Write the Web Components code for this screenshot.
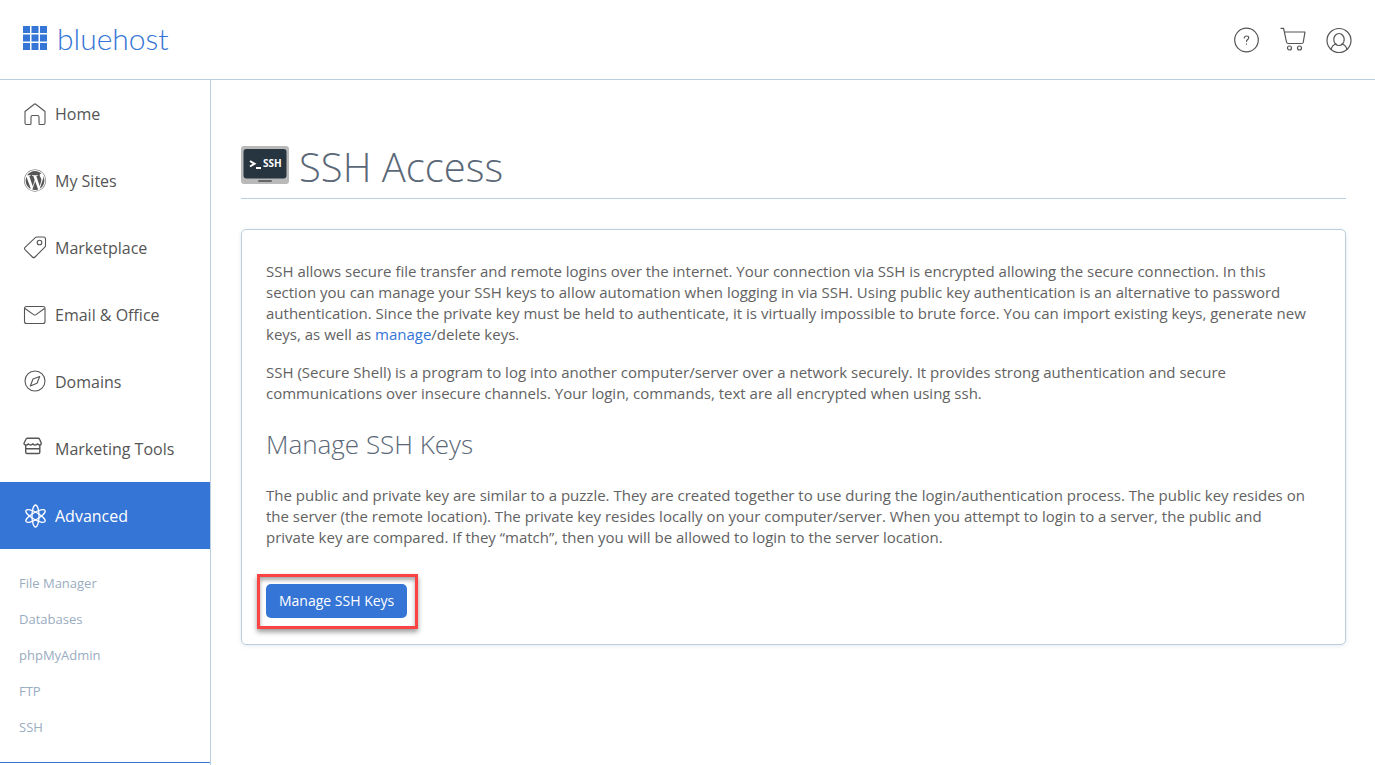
<!DOCTYPE html>
<html lang="en">
<head>
<meta charset="utf-8">
<meta name="viewport" content="width=device-width, initial-scale=1">
<title>SSH Access</title>
<style>
body { margin: 0; background: #fff; color: #626262; font-family: "Open Sans", "Noto Sans", sans-serif; font-size: 15px; line-height: 21px; --blue: #3575d6; --line: #b9cede; }
</style>
</head>
<body>
<host-app>
  <host-header slot="header"></host-header>
  <side-nav slot="nav">
    <nav-item icon="home">Home</nav-item>
    <nav-item icon="wordpress">My Sites</nav-item>
    <nav-item icon="tag">Marketplace</nav-item>
    <nav-item icon="mail">Email &amp; Office</nav-item>
    <nav-item icon="compass">Domains</nav-item>
    <nav-item icon="shop">Marketing Tools</nav-item>
    <nav-item icon="atom" active>Advanced</nav-item>
    <sub-item slot="sub">File Manager</sub-item>
    <sub-item slot="sub">Databases</sub-item>
    <sub-item slot="sub">phpMyAdmin</sub-item>
    <sub-item slot="sub">FTP</sub-item>
    <sub-item slot="sub">SSH</sub-item>
  </side-nav>
  <page-title>SSH Access</page-title>
  <ssh-card></ssh-card>
</host-app>

<script>
const icons = {
  home: '<path d="M2 9.500 11.200 2.200Q12 1.600 12.800 2.200L22 9.500V21q0 1.500-1.500 1.500H17q-1 0-1-1V15q0-1.500-1.500-1.500h-5Q8 13.500 8 15v6.500q0 1-1 1H3.500Q2 22.500 2 21V9.500Z"/>',
  wordpress: '<g transform="translate(.700 .200) scale(.0442)" fill="currentColor" stroke="none"><path d="M61.7 169.4l101.5 278C92.2 413 43.3 340.2 43.3 256c0-30.9 6.6-60.1 18.4-86.6zm337.9 75.9c0-26.3-9.4-44.5-17.5-58.7-10.8-17.5-20.9-32.4-20.9-49.9 0-19.6 14.8-37.8 35.7-37.8.9 0 1.8.1 2.8.2-37.9-34.7-88.3-55.9-143.7-55.9-74.3 0-139.7 38.1-177.8 95.9 5 .2 9.7.3 13.7.3 22.2 0 56.7-2.7 56.7-2.7 11.5-.7 12.8 16.2 1.4 17.5 0 0-11.5 1.3-24.3 2l77.5 230.4L249.8 247l-33.1-90.8c-11.5-.7-22.3-2-22.3-2-11.5-.7-10.1-18.2 1.3-17.5 0 0 35.1 2.7 56 2.7 22.2 0 56.7-2.7 56.7-2.7 11.5-.7 12.8 16.2 1.4 17.5 0 0-11.5 1.3-24.3 2l76.9 228.7 21.2-70.9c9-29.4 16-50.5 16-68.7zm-139.9 29.3l-63.8 185.5c19.1 5.6 39.2 8.7 60.1 8.7 24.8 0 48.5-4.3 70.6-12.1-.6-.9-1.1-1.9-1.5-2.9l-65.4-179.2zm183-120.7c.9 6.8 1.4 14 1.4 21.9 0 21.6-4 45.8-16.2 76.2l-65 187.9C426.2 403 468.7 334.5 468.7 256c0-37-9.4-71.8-26-102.1zM504 256c0 136.8-111.3 248-248 248C119.2 504 8 392.7 8 256 8 119.2 119.2 8 256 8c136.7 0 248 111.2 248 248zm-11.4 0c0-130.5-106.2-236.6-236.6-236.6C125.5 19.4 19.4 125.5 19.4 256S125.6 492.6 256 492.6c130.5 0 236.6-106.1 236.6-236.6z"/></g>',
  tag: '<path d="M12.300 1.700Q13 1 14 1h6.500Q22.500 1 22.500 3V9.500q0 1-.7 1.700L12 21q-1.300 1.300-2.600 0L2 13.600q-1-1.100 0-2.300Z"/><circle cx="16.500" cy="6.500" r="2.300"/>',
  mail: '<rect x="1.500" y="3.500" width="20.500" height="17" rx="2"/><path d="m2 5.500 8.600 6.100q1.200.8 2.400 0L21.500 5.500"/>',
  compass: '<circle cx="12" cy="11" r="10"/><path d="M16.700 6.500 14 13.300 7.300 16 10 9Z"/>',
  shop: '<g stroke-width="1.400"><path d="M3 2.300Q3.300 1.300 4.300 1.300h10.900q1 0 1.400 1l1.700 3.900q0 1.800-1.700 1.800-1.500 0-2-1.200-1 1.200-2.400 1.200T10 6.800Q9 8 7.600 8T5.300 6.800Q4.600 8 3 8 1 8 1 6.200Z"/><path d="M2.700 8v7.300q0 1.200 1.200 1.200h11.700q1.200 0 1.200-1.200V8M2.700 11.700h14"/></g>',
  atom: '<g stroke-width="1.300"><ellipse cx="12.500" cy="12" rx="3.500" ry="11"/><ellipse cx="12.500" cy="12" rx="3.500" ry="11" transform="rotate(60 12.500 12)"/><ellipse cx="12.500" cy="12" rx="3.500" ry="11" transform="rotate(120 12.500 12)"/></g>'
};

function define(name, html) {
  customElements.define(name, class extends HTMLElement {
    constructor() {
      super();
      const t = document.createElement('template');
      t.innerHTML = typeof html === 'function' ? html(this) : html;
      this.attachShadow({ mode: 'open' }).append(t.content.cloneNode(true));
    }
  });
}

define('host-app', `
<style>
:host { display: flex; flex-direction: column; min-height: 100vh; }
.body { display: flex; flex: 1; }
main { flex: 1; min-width: 0; padding: 60px 29px 30px 30px; }
</style>
<slot name="header"></slot>
<div class="body"><slot name="nav"></slot><main><slot></slot></main></div>`);

define('host-header', `
<style>
:host { display: block; border-bottom: 1px solid var(--line); }
header { display: flex; align-items: center; justify-content: space-between; height: 79px; padding: 0 22px; }
.logo { display: flex; align-items: center; gap: 9px; color: var(--blue); text-decoration: none; font: 300 30px/36px Lato, "Open Sans", sans-serif; padding-bottom: 4px; }
.tools { display: flex; gap: 18px; }
button { display: block; width: 28px; height: 28px; padding: 0; border: 0; background: none; color: #555; cursor: pointer; }
svg { display: block; }
.tools svg { fill: none; stroke: currentColor; stroke-width: 1.200; stroke-linejoin: round; stroke-linecap: round; }
</style>
<header>
  <a class="logo" href="#">
    <svg width="26" height="26" fill="currentColor" aria-hidden="true"><path d="M1 1h7v7H1zM9.500 1h7v7h-7zM18 1h7v7h-7zM1 9.500h7v7H1zM9.500 9.500h7v7h-7zM18 9.500h7v7h-7zM1 18h7v7H1zM9.500 18h7v7h-7zM18 18h7v7h-7z"/></svg>
    <span>bluehost</span>
  </a>
  <div class="tools">
    <button aria-label="Help"><svg width="28" height="28"><circle cx="13.500" cy="14" r="11.800"/><path d="M11.300 12q.1-2 2.300-2 2.100 0 2.100 1.800 0 1-1.100 1.700-1.100.8-1.100 1.900M13.500 17.900v.2"/></svg></button>
    <button aria-label="Cart"><svg width="28" height="28"><path d="M2 2.300h2.600L7.500 16q.3 1.500 1.700 1.500H22M5.500 6H26l-1.800 10.500q-.2 1-1.200 1"/><circle cx="10.500" cy="22" r="2"/><circle cx="20.500" cy="22" r="2"/></svg></button>
    <button aria-label="Account"><svg width="28" height="28"><circle cx="14" cy="14.500" r="12"/><ellipse cx="14" cy="13.500" rx="5.200" ry="6"/><path d="M6 23.500q1.200-4.500 5-5.500M22 23.500q-1.200-4.500-5-5.500"/></svg></button>
  </div>
</header>`);

define('side-nav', `
<style>
:host { display: flex; flex-direction: column; flex: none; width: 210px; border-right: 1px solid var(--line); }
.sub { padding: 16px 0 17px; border-bottom: 1px solid var(--blue); }
</style>
<nav aria-label="Main"><slot></slot><div class="sub"><slot name="sub"></slot></div></nav>`);

define('nav-item', el => `
<style>
:host { display: block; }
a { display: flex; align-items: center; gap: 8px; height: 67px; padding-left: 23px; color: #555; font-size: 16px; line-height: 22px; text-decoration: none; }
:host([active]) a { background: var(--blue); color: #fff; }
svg { flex: none; fill: none; stroke: currentColor; stroke-width: 1.100; stroke-linejoin: round; }
</style>
<a href="#"><svg width="24" height="24" aria-hidden="true">${icons[el.getAttribute('icon')]}</svg><slot></slot></a>`);

define('sub-item', `
<style>
:host { display: block; }
a { display: block; padding-left: 19px; color: #9aacbf; font-size: 13px; line-height: 36px; text-decoration: none; }
</style>
<a href="#"><slot></slot></a>`);

define('page-title', `
<style>
:host { display: flex; align-items: center; gap: 10px; height: 58px; margin-bottom: 30px; border-bottom: 1px solid var(--line); }
svg { flex: none; margin-bottom: 8px; }
h1 { margin: 0; padding-bottom: 4px; color: #5b6878; font-size: 40px; line-height: 54px; font-weight: 300; }
text { font: 700 10px "Open Sans", sans-serif; fill: #fff; }
</style>
<svg width="48" height="38" aria-hidden="true"><rect width="48" height="38" rx="3" fill="#b9b9b9"/><rect x="2.500" y="3" width="43" height="29.500" rx="3" fill="#263540"/><rect x="17" y="34" width="14" height="2" rx="1" fill="#666"/><path d="m9 15 4.500 2.800L9 20.500M15 22h5" fill="none" stroke="#fff" stroke-width="2"/><text x="22" y="21">SSH</text></svg>
<h1><slot></slot></h1>`);

define('ssh-card', `
<style>
:host { display: block; padding: 31px 24px 26px; border: 1px solid var(--line); border-radius: 5px; box-shadow: 0 1px 4px rgba(120,150,185,.2); }
p { margin: 0 0 17px; padding-right: 10px; }
p a { color: var(--blue); text-decoration: none; }
h2 { margin: 22px 0 23px; color: #5b6878; font-size: 26px; line-height: 36px; font-weight: 300; }
.action { position: relative; width: fit-content; margin-top: 36px; }
button { display: block; height: 34px; padding: 0 13px; border: 0; border-radius: 5px; background: var(--blue); color: #fff; font: 500 14px/20px "Open Sans", sans-serif; cursor: pointer; }
.mark { position: absolute; inset: -10px -11px -11px -9px; border: 3px solid #fb4343; box-shadow: 0 3px 5px rgba(0,0,0,.4), inset 0 3px 4px rgba(0,0,0,.35); pointer-events: none; }
</style>
<p>SSH allows secure file transfer and remote logins over the internet. Your connection via SSH is encrypted allowing the secure connection. In this section you can manage your SSH keys to allow automation when logging in via SSH. Using public key authentication is an alternative to password authentication. Since the private key must be held to authenticate, it is virtually impossible to brute force. You can import existing keys, generate new keys, as well as <a href="#">manage</a>/delete keys.</p>
<p>SSH (Secure Shell) is a program to log into another computer/server over a network securely. It provides strong authentication and secure communications over insecure channels. Your login, commands, text are all encrypted when using ssh.</p>
<h2>Manage SSH Keys</h2>
<p>The public and private key are similar to a puzzle. They are created together to use during the login/authentication process. The public key resides on the server (the remote location). The private key resides locally on your computer/server. When you attempt to login to a server, the public and private key are compared. If they “match”, then you will be allowed to login to the server location.</p>
<div class="action"><button>Manage SSH Keys</button><div class="mark"></div></div>`);
</script>
</body>
</html>
